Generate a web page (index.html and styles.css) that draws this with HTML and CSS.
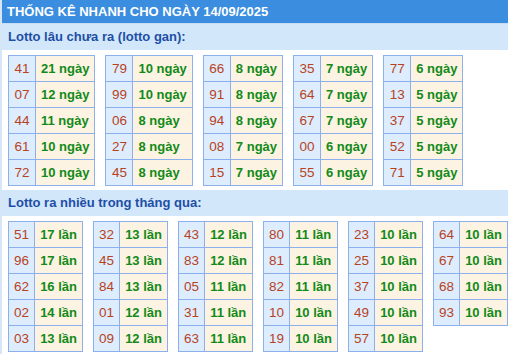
FILE: index.html
```html
<!DOCTYPE html>
<html lang="vi">
<head>
<meta charset="utf-8">
<title>Thống kê nhanh</title>
<link rel="stylesheet" href="styles.css">
</head>
<body>
<div class="box">
  <div class="title">THỐNG KÊ NHANH CHO NGÀY 14/09/2025</div>
  <div class="sub">Lotto lâu chưa ra (lotto gan):</div>
  <div class="tables">
    <table><tr><td class="n">41</td><td class="v">21 ngày</td></tr><tr><td class="n">07</td><td class="v">12 ngày</td></tr><tr><td class="n">44</td><td class="v">11 ngày</td></tr><tr><td class="n">61</td><td class="v">10 ngày</td></tr><tr><td class="n">72</td><td class="v">10 ngày</td></tr></table>
    <table><tr><td class="n">79</td><td class="v">10 ngày</td></tr><tr><td class="n">99</td><td class="v">10 ngày</td></tr><tr><td class="n">06</td><td class="v">8 ngày</td></tr><tr><td class="n">27</td><td class="v">8 ngày</td></tr><tr><td class="n">45</td><td class="v">8 ngày</td></tr></table>
    <table><tr><td class="n">66</td><td class="v">8 ngày</td></tr><tr><td class="n">91</td><td class="v">8 ngày</td></tr><tr><td class="n">94</td><td class="v">8 ngày</td></tr><tr><td class="n">08</td><td class="v">7 ngày</td></tr><tr><td class="n">15</td><td class="v">7 ngày</td></tr></table>
    <table><tr><td class="n">35</td><td class="v">7 ngày</td></tr><tr><td class="n">64</td><td class="v">7 ngày</td></tr><tr><td class="n">67</td><td class="v">7 ngày</td></tr><tr><td class="n">00</td><td class="v">6 ngày</td></tr><tr><td class="n">55</td><td class="v">6 ngày</td></tr></table>
    <table><tr><td class="n">77</td><td class="v">6 ngày</td></tr><tr><td class="n">13</td><td class="v">5 ngày</td></tr><tr><td class="n">37</td><td class="v">5 ngày</td></tr><tr><td class="n">52</td><td class="v">5 ngày</td></tr><tr><td class="n">71</td><td class="v">5 ngày</td></tr></table>
  </div>
  <div class="sub">Lotto ra nhiều trong tháng qua:</div>
  <div class="tables">
    <table><tr><td class="n">51</td><td class="v">17 lần</td></tr><tr><td class="n">96</td><td class="v">17 lần</td></tr><tr><td class="n">62</td><td class="v">16 lần</td></tr><tr><td class="n">02</td><td class="v">14 lần</td></tr><tr><td class="n">03</td><td class="v">13 lần</td></tr></table>
    <table><tr><td class="n">32</td><td class="v">13 lần</td></tr><tr><td class="n">45</td><td class="v">13 lần</td></tr><tr><td class="n">84</td><td class="v">13 lần</td></tr><tr><td class="n">01</td><td class="v">12 lần</td></tr><tr><td class="n">09</td><td class="v">12 lần</td></tr></table>
    <table><tr><td class="n">43</td><td class="v">12 lần</td></tr><tr><td class="n">83</td><td class="v">12 lần</td></tr><tr><td class="n">05</td><td class="v">11 lần</td></tr><tr><td class="n">31</td><td class="v">11 lần</td></tr><tr><td class="n">63</td><td class="v">11 lần</td></tr></table>
    <table><tr><td class="n">80</td><td class="v">11 lần</td></tr><tr><td class="n">81</td><td class="v">11 lần</td></tr><tr><td class="n">82</td><td class="v">11 lần</td></tr><tr><td class="n">10</td><td class="v">10 lần</td></tr><tr><td class="n">19</td><td class="v">10 lần</td></tr></table>
    <table><tr><td class="n">23</td><td class="v">10 lần</td></tr><tr><td class="n">25</td><td class="v">10 lần</td></tr><tr><td class="n">37</td><td class="v">10 lần</td></tr><tr><td class="n">49</td><td class="v">10 lần</td></tr><tr><td class="n">57</td><td class="v">10 lần</td></tr></table>
    <table><tr><td class="n">64</td><td class="v">10 lần</td></tr><tr><td class="n">67</td><td class="v">10 lần</td></tr><tr><td class="n">68</td><td class="v">10 lần</td></tr><tr><td class="n">93</td><td class="v">10 lần</td></tr></table>
  </div>
</div>
</body>
</html>
```

FILE: styles.css
```css
html, body {
  margin: 0;
  padding: 0;
  background: #ffffff;
}
body {
  font-family: "Liberation Sans", Arial, sans-serif;
  font-size: 13px;
}
.box {
  width: 508px;
  border-left: 2px solid #d7e6f7;
  box-sizing: border-box;
}
.title {
  background: #3a8ddf;
  color: #ffffff;
  font-weight: bold;
  font-size: 13px;
  height: 23px;
  line-height: 23px;
  padding-left: 5px;
  border-bottom: 1px solid #c6dcf4;
}
.sub {
  background: #d3e7fb;
  color: #1d4fa6;
  font-weight: bold;
  font-size: 13px;
  height: 26px;
  line-height: 26px;
  padding-left: 6px;
}
.tables {
  display: flex;
  align-items: flex-start;
  gap: 10px;
  padding: 5px 0 4px 6px;
}
table {
  border-collapse: collapse;
  border: 1px solid #8bb0ec;
}
td {
  border: 1px solid #8bb0ec;
  height: 25px;
  padding: 0 5px;
  font-size: 13px;
  white-space: nowrap;
}
td.n {
  background: #deedfd;
  color: #b6431d;
  font-size: 13.5px;
  text-align: center;
  width: 26px;
  padding: 0;
}
td.v {
  background: #fdf3e3;
  color: #128a18;
  font-weight: bold;
}
```
